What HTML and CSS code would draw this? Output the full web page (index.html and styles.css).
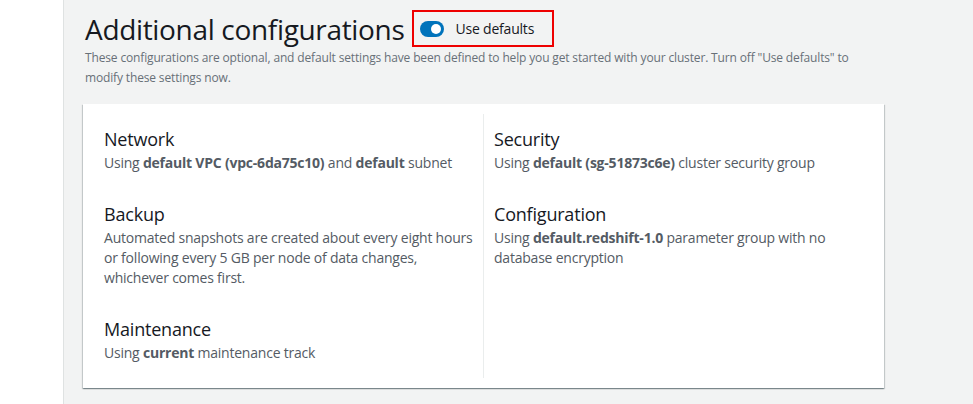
FILE: index.html
```html
<!DOCTYPE html>
<html lang="en">
<head>
<meta charset="utf-8">
<title>Additional configurations</title>
<link rel="stylesheet" href="styles.css">
</head>
<body>
<div class="layout">
  <aside class="nav"></aside>
  <main class="main">
    <div class="header">
      <h1 class="title">Additional configurations</h1>
      <div class="highlight">
        <span class="toggle"><span class="knob"></span></span>
        <span class="toggle-label">Use defaults</span>
      </div>
    </div>
    <p class="desc">These configurations are optional, and default settings have been defined to help you get started with your cluster. Turn off "Use defaults" to modify these settings now.</p>
    <section class="card">
      <div class="col col-left">
        <div class="item">
          <h2 class="item-title">Network</h2>
          <p class="item-text">Using <b>default VPC (vpc-6da75c10)</b> and <b>default</b> subnet</p>
        </div>
        <div class="item">
          <h2 class="item-title">Backup</h2>
          <p class="item-text">Automated snapshots are created about every eight hours or following every 5 GB per node of data changes, whichever comes first.</p>
        </div>
        <div class="item">
          <h2 class="item-title">Maintenance</h2>
          <p class="item-text">Using <b>current</b> maintenance track</p>
        </div>
      </div>
      <div class="col col-right">
        <div class="item">
          <h2 class="item-title">Security</h2>
          <p class="item-text">Using <b>default (sg-51873c6e)</b> cluster security group</p>
        </div>
        <div class="item">
          <h2 class="item-title">Configuration</h2>
          <p class="item-text">Using <b>default.redshift-1.0</b> parameter group with no database encryption</p>
        </div>
      </div>
    </section>
  </main>
</div>
</body>
</html>
```
FILE: styles.css
```css
html, body {
  margin: 0;
  padding: 0;
  height: 100%;
}
body {
  font-family: "Open Sans", "Noto Sans", "Liberation Sans", sans-serif;
  background: #f2f3f3;
  color: #16191f;
}
.layout {
  display: flex;
  min-height: 100vh;
}
.nav {
  width: 63px;
  flex: none;
  background: #ffffff;
  border-right: 1px solid #dfe2e2;
}
.main {
  flex: 1;
  padding: 10px 89px 0 19px;
}
.header {
  display: flex;
  align-items: center;
  gap: 8px;
  padding-left: 2px;
  height: 37px;
}
.title {
  margin: 0;
  font-size: 28px;
  font-weight: 400;
  line-height: 36px;
  letter-spacing: -0.33px;
  color: #16191f;
}
.highlight {
  display: flex;
  align-items: center;
  box-sizing: border-box;
  height: 37px;
  width: 142px;
  border: 2px solid #ee0000;
  padding: 0 0 0 6px;
  gap: 11px;
}
.toggle {
  position: relative;
  display: block;
  width: 24px;
  height: 16px;
  border-radius: 8px;
  background: #0073bb;
}
.knob {
  position: absolute;
  top: 3px;
  right: 3px;
  width: 10px;
  height: 10px;
  border-radius: 50%;
  background: #ffffff;
}
.toggle-label {
  font-size: 14px;
  line-height: 20px;
  letter-spacing: -0.2px;
  color: #16191f;
}
.desc {
  margin: 1px 0 16px;
  padding-left: 2px;
  font-size: 12px;
  line-height: 20px;
  letter-spacing: -0.15px;
  color: #687078;
}
.card {
  display: grid;
  grid-template-columns: 400px 401px;
  background: #ffffff;
  padding: 10px 0;
  box-shadow: 0 1px 1px 0 rgba(0, 28, 36, 0.3), 1px 1px 1px 0 rgba(0, 28, 36, 0.15), -1px 1px 1px 0 rgba(0, 28, 36, 0.15);
}
.col {
  padding: 13px 10px 15px 21px;
  display: flex;
  flex-direction: column;
  gap: 29px;
}
.col-left {
  padding-right: 1px;
}
.col-right {
  border-left: 1px solid #eaeded;
  padding-left: 10px;
}
.item-title {
  margin: 0 0 2px;
  font-size: 18px;
  font-weight: 400;
  line-height: 24px;
  letter-spacing: -0.2px;
  color: #16191f;
}
.item-text {
  margin: 0;
  font-size: 14px;
  line-height: 20px;
  letter-spacing: -0.22px;
  color: #545b64;
}
.item-text b {
  font-weight: 700;
}
```
